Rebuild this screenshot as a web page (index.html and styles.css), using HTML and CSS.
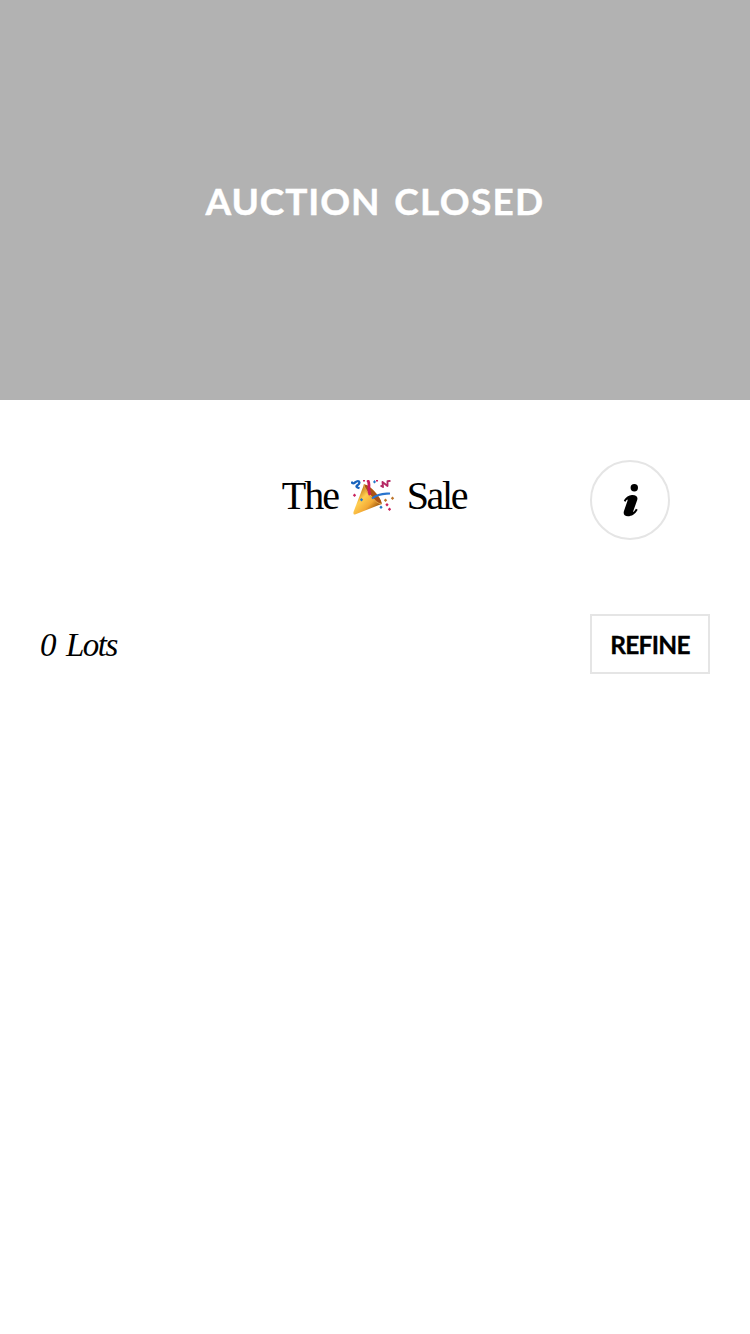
FILE: index.html
```html
<!DOCTYPE html>
<html lang="en">
<head>
<meta charset="utf-8">
<meta name="viewport" content="width=device-width">
<title>The Sale</title>
<link rel="stylesheet" href="styles.css">
</head>
<body>
<header class="banner"><span class="banner-text"><span class="auction">AUCTION</span> <span class="closed">CLOSED</span></span></header>
<main>
  <section class="title-row">
    <h1 class="title">
      <span class="word-the">The</span>
      <svg class="popper" viewBox="0 0 44 36" aria-label="Party popper" role="img">
        <defs>
          <linearGradient id="cone" x1="0" y1="0" x2="1" y2="1">
            <stop offset="0.15" stop-color="#b96a10"/>
            <stop offset="0.4" stop-color="#ffce50"/>
            <stop offset="0.62" stop-color="#f3a935"/>
            <stop offset="0.85" stop-color="#8f4704"/>
          </linearGradient>
        </defs>
        <path d="M13 4.500C18 4 31 18 30.500 24L4 34.500Q2 35 2.500 32Z" fill="url(#cone)"/>
        <path d="M13 4.500C18 4 31 18 30.500 24C25 22 16 12 13 4.500Z" fill="#a95315"/>
        <path d="M13 4.500C13.500 11 23 23 30.500 24" fill="none" stroke="#dfa044" stroke-width="1"/>
        <path d="M16.500 0C20 4 16 7 19 15" fill="none" stroke="#c91c5d" stroke-width="2.800"/>
        <path d="M21 18.500C28 13 33 14 39 13.500" fill="none" stroke="#2874ce" stroke-width="2.200"/>
        <path d="M.5 1.500Q1.500 4.500 4 2.500T8 1.500Q9.200 3.500 6.500 5.200T8.500 8.200" fill="none" stroke="#1863bd" stroke-width="2.300"/>
        <path d="M29.500 5.500L32 7L31.500 2L36.500 6L36.500 1.200L39.500 .8" fill="none" stroke="#b52864" stroke-width="1.900" stroke-linejoin="round"/>
        <path d="M3.500 13.500l1.700 1.700-1.700 1.700-1.700-1.700zM12 0h2v1.500h-2zM25 0h2v1.500h-2zM36 23l1.700 1.700-1.700 1.700-1.700-1.700zM38.500 27.500l1.700 1.700-1.700 1.700-1.700-1.700z" fill="#ca245e"/>
        <path d="M10.500 18l1.700 1.700-1.700 1.700-1.700-1.700zM23.500 0l1.500 2-1.500 1.500L22 2zM30 25.500l1.700 1.700-1.700 1.700-1.700-1.700z" fill="#2478ca"/>
        <path d="M34.500 18.500l1.700 1.700-1.700 1.700-1.700-1.700zM41.500 16.500l1.700 1.700-1.700 1.700-1.700-1.700z" fill="#bd7429"/>
      </svg>
      <span class="word-sale">Sale</span>
    </h1>
    <button class="info" aria-label="Information">
      <svg class="info-icon" viewBox="0 0 16 34">
        <circle cx="11.300" cy="4.700" r="3.700"/>
        <path d="M.8 17.500C3 14 6 11.800 9.400 12C13.200 12.200 15.200 14 14.200 17L10.300 28C9.700 29.800 10.700 29.200 12.900 25.700L14.700 26.700C12.200 31.200 8.500 33.200 5 33.200C1.400 33.200 .1 31.200 .9 28.200L4.400 18C5.100 15.900 4.200 16.200 2.300 18.900Z"/>
      </svg>
    </button>
  </section>
  <section class="filter-row">
    <span class="lots"><span class="count">0</span><span class="lots-label">Lots</span></span>
    <button class="refine"><span class="refine-text">REFINE</span></button>
  </section>
</main>
</body>
</html>
```
FILE: styles.css
```css
body {
  margin: 0;
  background: #fff;
  color: #000;
}

.banner {
  height: 400px;
  display: flex;
  align-items: center;
  justify-content: center;
  background: #b2b2b2;
  color: #fff;
}

.banner-text {
  display: flex;
  gap: 14px;
  padding-top: 2px;
  font: 700 37px/48px Lato, sans-serif;
  -webkit-text-stroke: 0.400px #fff;
  white-space: nowrap;
}

.auction {
  letter-spacing: 0.900px;
}

.closed {
  letter-spacing: 1.300px;
}

.title-row {
  height: 80px;
  padding: 60px 80px 0;
  display: grid;
  grid-template-columns: 80px 1fr 80px;
  align-items: center;
}

.title {
  grid-column: 2;
  justify-self: center;
  display: flex;
  align-items: center;
  margin: 0;
  padding: 0 2px 8px 0;
  font: 400 40px/48px "Liberation Serif", serif;
  white-space: nowrap;
}

.word-the {
  width: 69px;
  letter-spacing: -1.900px;
}

.popper {
  width: 44px;
  height: 36px;
  margin-top: 3px;
}

.word-sale {
  margin-left: 12px;
  letter-spacing: -2.300px;
}

.info,
.refine {
  box-sizing: border-box;
  display: flex;
  align-items: center;
  justify-content: center;
  padding: 0;
  border: 2px solid #e5e5e5;
  background: #fff;
  color: #000;
}

.info {
  width: 80px;
  height: 80px;
  border-radius: 50%;
}

.info-icon {
  width: 16px;
  height: 34px;
  margin-left: 2px;
}

.filter-row {
  display: flex;
  align-items: center;
  justify-content: space-between;
  padding: 74px 40px 0;
}

.lots {
  display: flex;
  padding-top: 1px;
  font: italic 400 33px/44px "Liberation Serif", serif;
}

.count {
  width: 26px;
}

.lots-label {
  letter-spacing: -1.500px;
}

.refine {
  width: 120px;
  height: 60px;
}

.refine-text {
  padding-top: 1px;
  font: 700 24.500px/32px Lato, sans-serif;
  letter-spacing: -0.700px;
  -webkit-text-stroke: 0.300px #000;
}
```
